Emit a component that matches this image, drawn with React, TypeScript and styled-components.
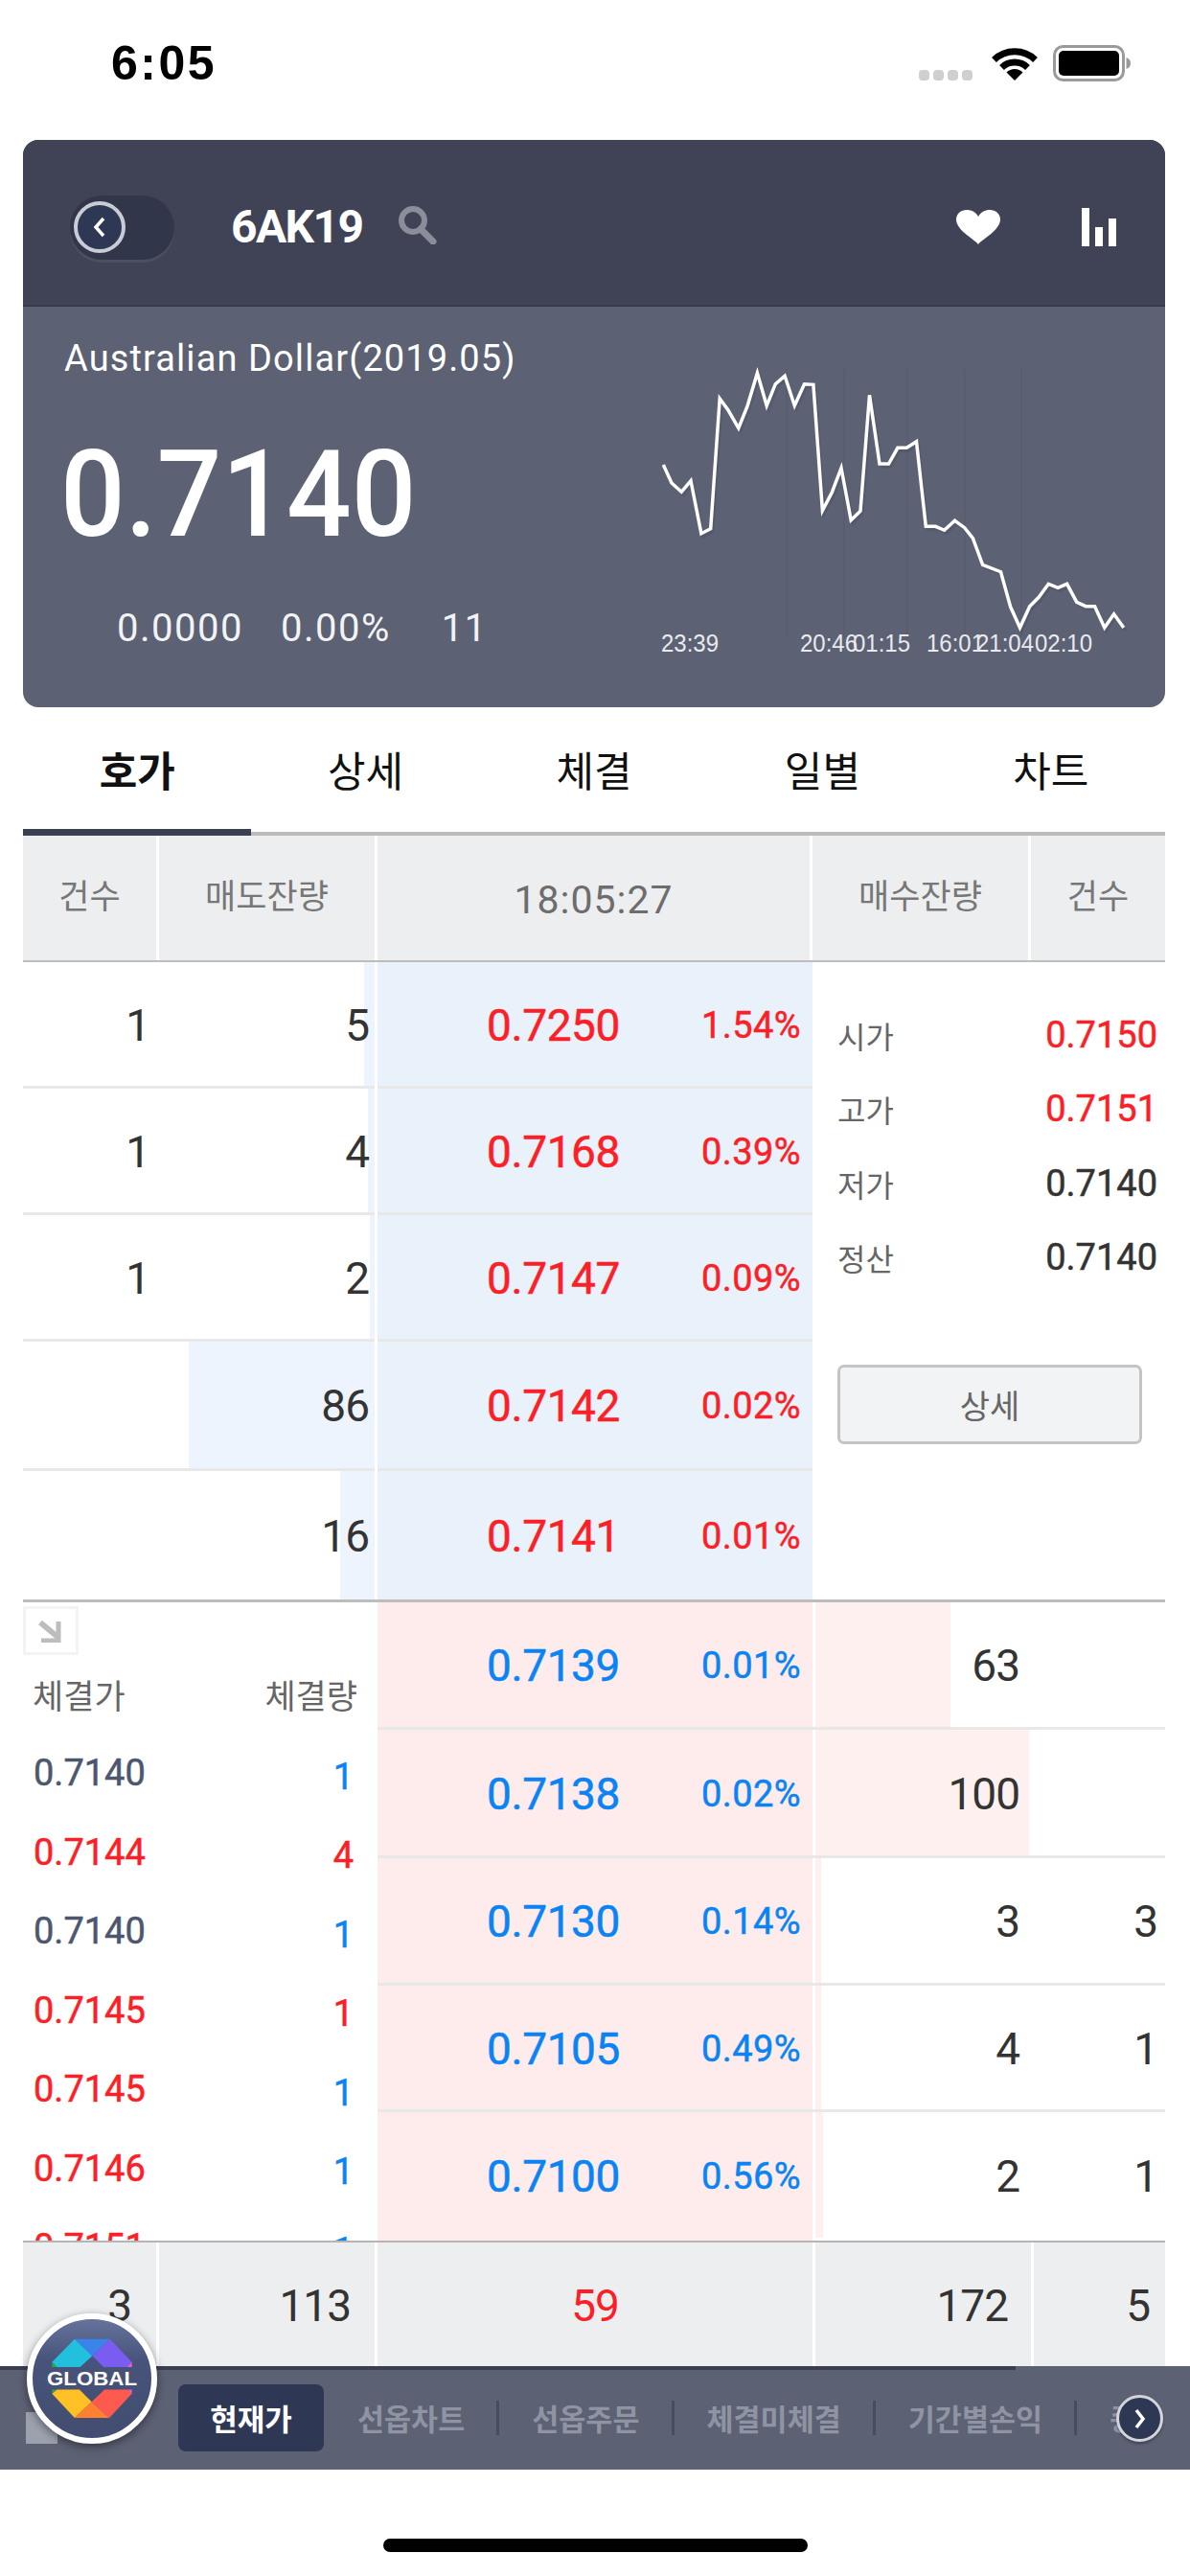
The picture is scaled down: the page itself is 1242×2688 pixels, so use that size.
import React from 'react';
import styled, { createGlobalStyle } from 'styled-components';

const NUM = 'Roboto, "Noto Sans CJK KR", sans-serif';
const KR = '"Noto Sans CJK KR", Roboto, sans-serif';
const RED = '#fb1f27';
const BLUE = '#0a84f5';
const DARK = '#333333';

const Global = createGlobalStyle`
  html, body { margin: 0; padding: 0; background: #fff; }
  * { box-sizing: border-box; }
`;

const Page = styled.div`
  position: relative;
  width: 1242px;
  height: 2688px;
  overflow: hidden;
  background: #fff;
  display: flex;
  flex-direction: column;
`;

/* status bar */
const StatusBar = styled.div`
  height: 146px;
  padding: 47px 61px 0 116px;
  display: flex;
  align-items: flex-start;
  justify-content: space-between;
`;
const Clock = styled.div`
  font: 700 50px/38px "Liberation Sans", sans-serif;
  letter-spacing: 2.5px;
  color: #000;
`;
const StatusIcons = styled.div`
  display: flex;
  align-items: flex-start;
`;
const Dots = styled.div`
  display: flex;
  gap: 4px;
  margin: 26px 19px 0 0;
`;
const Dot = styled.span`
  width: 11px;
  height: 11px;
  border-radius: 4px;
  background: #cfcfcf;
`;

/* content */
const Content = styled.div`
  width: 1192px;
  margin-left: 24px;
`;
const QuoteCard = styled.div`
  height: 592px;
  border-radius: 16px;
  overflow: hidden;
  background: #5c6174;
`;
const CardHeader = styled.div`
  height: 174px;
  padding: 10px 51px 0 49px;
  background: #3f4355;
  border-bottom: 2px solid #363a4b;
  display: flex;
  align-items: center;
`;
const BackToggle = styled.div`
  width: 109px;
  height: 67px;
  padding: 6px 0 0 4px;
  border-radius: 34px;
  background: #32364a;
  box-shadow: 0 3px 0 #4b4f62;
`;
const BackCircle = styled.div`
  width: 54px;
  height: 54px;
  border-radius: 50%;
  background: #2e3754;
  border: 4px solid #c9ccd5;
  display: flex;
  align-items: center;
  justify-content: center;
`;
const Symbol = styled.div`
  margin-left: 59px;
  font: 700 48px/50px ${NUM};
  color: #fff;
  letter-spacing: -1.6px;
`;
const SearchIcon = styled.svg`
  margin: -6px 0 0 37px;
`;
const HeaderActions = styled.div`
  margin-left: auto;
  display: flex;
  align-items: center;
  gap: 85px;
`;
const Hero = styled.div`
  display: flex;
`;
const HeroLeft = styled.div`
  width: 656px;
  padding: 34px 0 0 43px;
`;
const HeroTitle = styled.div`
  font: 400 38px/40px ${NUM};
  letter-spacing: 1.1px;
  color: #fff;
  white-space: nowrap;
`;
const BigPrice = styled.div`
  margin: 57px 0 0 -4px;
  font: 500 126px/130px ${NUM};
  color: #fff;
  transform: scaleX(0.945);
  transform-origin: left center;
`;
const Stats = styled.div`
  margin-top: 53px;
  padding-left: 55px;
  display: flex;
  gap: 39px;
  font: 400 40px/44px ${NUM};
  letter-spacing: 1.5px;
  color: #f2f3f5;
  span:last-child {
    margin-left: 14px;
  }
`;
const Spark = styled.svg`
  display: block;
  margin-top: 50px;
`;

/* tabs */
const Tabs = styled.div`
  display: grid;
  grid-template-columns: repeat(5, 1fr);
`;
const Tab = styled.div<{ $active?: boolean }>`
  height: 134px;
  padding-bottom: 6px;
  display: flex;
  align-items: center;
  justify-content: center;
  font: ${p => (p.$active ? 700 : 400)} 43px/50px ${KR};
  color: #111;
  box-shadow: inset 0 ${p => (p.$active ? '-7px' : '-4px')} ${p => (p.$active ? '#3a3f52' : '#bbbbbb')};
`;

/* table */
const HeadRow = styled.div`
  display: grid;
  grid-template-columns: 139px 225px 451px 225px 1fr;
  column-gap: 3px;
  height: 132px;
  border-bottom: 2px solid #bdbdbd;
`;
const HeadCell = styled.div<{ $time?: boolean }>`
  background: #edeef0;
  display: flex;
  align-items: center;
  justify-content: center;
  padding: ${p => (p.$time ? '4px 0 0' : '0 0 9px')};
  color: ${p => (p.$time ? '#6d6d6d' : '#777')};
  font: ${p => (p.$time ? `400 41px/50px ${NUM}` : `400 35px/40px ${KR}`)};
  letter-spacing: ${p => (p.$time ? '1px' : '0')};
`;
const Section = styled.div<{ $h: number }>`
  height: ${p => p.$h}px;
  display: flex;
  overflow: hidden;
`;
const Column = styled.div<{ $w: number }>`
  width: ${p => p.$w}px;
  flex: none;
  display: flex;
  flex-direction: column;
`;
const Row = styled.div<{ $h: number; $last?: boolean; $strong?: boolean }>`
  height: ${p => p.$h}px;
  flex: none;
  display: grid;
  border-bottom: 3px solid ${p => (p.$strong ? '#bdbdbd' : p.$last ? 'transparent' : '#e8e8e8')};
`;
const AskVolumeGrid = styled(Row)`
  grid-template-columns: 139px 3px 225px;
`;
const BidVolumeGrid = styled(Row)`
  grid-template-columns: 3px 225px 1fr;
`;
const Gap = styled.span``;
const NumCell = styled.div<{ $pad: number; $fill?: number; $tint?: string; $align?: string }>`
  display: flex;
  align-items: center;
  justify-content: flex-end;
  padding: 2px ${p => p.$pad}px 0 0;
  font: 400 46px/50px ${NUM};
  letter-spacing: -1px;
  color: ${DARK};
  background: linear-gradient(${p => p.$tint || '#fff'}, ${p => p.$tint || '#fff'}) no-repeat ${p => p.$align || 'right'} / ${p => p.$fill || 0}px 100%;
`;
const PriceRow = styled(Row)<{ $bg: string }>`
  display: flex;
  align-items: center;
  justify-content: space-between;
  padding: 2px 12px 0 114px;
  background: ${p => p.$bg};
`;
const Price = styled.span<{ $c: string }>`
  font: 400 46px/50px ${NUM};
  letter-spacing: -0.4px;
  color: ${p => p.$c};
  -webkit-text-stroke: 0.5px ${p => p.$c};
`;
const Pct = styled.span<{ $c: string }>`
  font: 400 38px/50px ${NUM};
  letter-spacing: 0.4px;
  color: ${p => p.$c};
  -webkit-text-stroke: 0.5px ${p => p.$c};
`;

/* info panel */
const InfoPanel = styled.div`
  flex: 1;
  padding: 37px 8px 0 26px;
`;
const InfoRow = styled.div`
  height: 77.5px;
  display: flex;
  align-items: center;
  justify-content: space-between;
`;
const InfoLabel = styled.span`
  font: 400 32px/40px ${KR};
  color: #666;
`;
const InfoValue = styled.span<{ $red?: boolean }>`
  font: 400 38px/44px ${NUM};
  color: ${p => (p.$red ? RED : DARK)};
  -webkit-text-stroke: 0.5px ${p => (p.$red ? RED : DARK)};
`;
const DetailButton = styled.div`
  width: 318px;
  height: 83px;
  margin-top: 73px;
  border: 3px solid #c4c4c4;
  border-radius: 7px;
  background: #f2f3f5;
  display: flex;
  align-items: center;
  justify-content: center;
  font: 400 34px/40px ${KR};
  color: #666;
`;

/* ticks */
const TickPanel = styled.div`
  width: 370px;
  flex: none;
  padding-top: 4px;
`;
const ArrowBox = styled.div`
  width: 58px;
  height: 51px;
  border: 3px solid #f3f3f3;
  display: flex;
  align-items: center;
  justify-content: center;
`;
const TickHead = styled.div`
  height: 82px;
  padding: 0 21px 0 10px;
  display: flex;
  align-items: center;
  justify-content: space-between;
  font: 400 35px/40px ${KR};
  color: #666;
`;
const TickRow = styled.div`
  height: 82.5px;
  padding: 0 25px 0 11px;
  display: flex;
  align-items: center;
  justify-content: space-between;
`;
const TickPrice = styled.span<{ $c: string }>`
  font: 400 38px/44px ${NUM};
  color: ${p => p.$c};
  -webkit-text-stroke: 0.5px ${p => p.$c};
`;
const TickVol = styled.span<{ $c: string }>`
  padding-top: 7px;
  font: 400 38px/44px ${NUM};
  color: ${p => p.$c};
  -webkit-text-stroke: 0.5px ${p => p.$c};
`;

/* totals */
const Totals = styled.div`
  display: grid;
  grid-template-columns: 139px 225px 454px 225px 1fr;
  column-gap: 3px;
  height: 131px;
  border-top: 2px solid #b5b5b5;
`;
const TotalCell = styled.div<{ $center?: boolean; $pad?: number; $red?: boolean }>`
  background: #edeef0;
  display: flex;
  align-items: center;
  justify-content: ${p => (p.$center ? 'center' : 'flex-end')};
  padding: 2px ${p => p.$pad || 0}px 0 0;
  font: 400 46px/50px ${NUM};
  letter-spacing: -1px;
  color: ${p => (p.$red ? RED : DARK)};
`;

/* bottom nav */
const BottomNav = styled.div`
  position: relative;
  height: 108px;
  padding: 0 28px 0 186px;
  display: flex;
  align-items: center;
  overflow: hidden;
  background: linear-gradient(#3a3e50, #3a3e50) no-repeat left top / 1060px 4px, #5c6174;
`;
const NavActive = styled.div`
  flex: none;
  width: 152px;
  height: 70px;
  border-radius: 8px;
  background: #2e3754;
  display: flex;
  align-items: center;
  justify-content: center;
  font: 700 31px/36px ${KR};
  color: #fff;
`;
const NavItem = styled.div<{ $first?: boolean; $noLine?: boolean }>`
  flex: none;
  height: 36px;
  padding: 0 33px 0 ${p => (p.$first ? '35px' : '34px')};
  border-right: ${p => (p.$noLine ? '0' : '3px solid #474c61')};
  font: 700 30.5px/36px ${KR};
  color: #8f94a3;
  white-space: nowrap;
`;
const NavNext = styled.div`
  position: absolute;
  top: 30px;
  right: 28px;
  width: 49px;
  height: 49px;
  border-radius: 50%;
  border: 3px solid #d3d5db;
  background: #2e3754;
  box-shadow: 0 2px 3px rgba(0, 0, 0, 0.3);
  display: flex;
  align-items: center;
  justify-content: center;
`;
const CornerMark = styled.div`
  position: absolute;
  left: 27px;
  top: 2517px;
  width: 33px;
  height: 33px;
  background: #9ca1ae;
`;
const GlobalBadge = styled.div`
  position: absolute;
  left: 28px;
  top: 2414px;
  width: 136px;
  height: 136px;
  border-radius: 50%;
  border: 6px solid #fff;
  background: linear-gradient(180deg, #66739c 0%, #47537a 35%, #424d70 100%);
  box-shadow: 0 3px 10px rgba(0, 0, 0, 0.45);
  display: flex;
  align-items: center;
  justify-content: center;
`;
const HomeBar = styled.div`
  width: 443px;
  height: 14px;
  margin: 72px 0 0 400px;
  border-radius: 7px;
  background: #000;
`;

const sparkRaw: [number, number][] = [
  [112, 375], [135, 432], [162, 460], [188, 425], [217, 590], [243, 575], [268, 168], [292, 205], [320, 260],
  [345, 190], [372, 88], [398, 190], [422, 122], [448, 97], [475, 190], [502, 122], [527, 124], [552, 518],
  [578, 462], [604, 385], [631, 548], [657, 520], [682, 157], [710, 372], [735, 372], [760, 322], [785, 322],
  [812, 302], [838, 568], [865, 568], [889, 580], [918, 550], [945, 572], [968, 605], [995, 688], [1045, 710],
  [1072, 820], [1098, 885], [1125, 818], [1150, 790], [1177, 748], [1203, 760], [1228, 748], [1255, 805],
  [1280, 818], [1305, 818], [1332, 885], [1358, 842], [1385, 885],
];
const sparkPoints = sparkRaw.map(([x, y]) => `${(650 + x / 2.649).toFixed(1)},${(360 + y / 3).toFixed(1)}`).join(' ');
const sparkLabels: [string, number][] = [
  ['23:39', 690], ['20:46', 835], ['01:15', 890], ['16:01', 967], ['21:04', 1019], ['02:10', 1080],
];

const asks = [
  { c: '1', v: '5', fill: 11, p: '0.7250', pc: '1.54%', h: 132 },
  { c: '1', v: '4', fill: 7, p: '0.7168', pc: '0.39%', h: 132 },
  { c: '1', v: '2', fill: 5, p: '0.7147', pc: '0.09%', h: 132 },
  { c: '', v: '86', fill: 194, p: '0.7142', pc: '0.02%', h: 135 },
  { c: '', v: '16', fill: 36, p: '0.7141', pc: '0.01%', h: 137 },
];
const bids = [
  { c: '', v: '63', fill: 141, p: '0.7139', pc: '0.01%', h: 133 },
  { c: '', v: '100', fill: 223, p: '0.7138', pc: '0.02%', h: 134 },
  { c: '3', v: '3', fill: 6, p: '0.7130', pc: '0.14%', h: 133 },
  { c: '1', v: '4', fill: 6, p: '0.7105', pc: '0.49%', h: 132 },
  { c: '1', v: '2', fill: 8, p: '0.7100', pc: '0.56%', h: 134 },
];
const ticks = [
  ['0.7140', '#4d566f', '1', BLUE],
  ['0.7144', RED, '4', RED],
  ['0.7140', '#4d566f', '1', BLUE],
  ['0.7145', RED, '1', RED],
  ['0.7145', RED, '1', BLUE],
  ['0.7146', RED, '1', BLUE],
  ['0.7151', RED, '1', BLUE],
];
const info = [
  ['시가', '0.7150', true],
  ['고가', '0.7151', true],
  ['저가', '0.7140', false],
  ['정산', '0.7140', false],
] as const;

export default function App() {
  return (
    <Page>
      <Global />
      <StatusBar>
        <Clock>6:05</Clock>
        <StatusIcons>
          <Dots><Dot /><Dot /><Dot /><Dot /></Dots>
          <svg width="50" height="37" viewBox="0 0 50 37">
            <path d="M3.5 15.5A31 31 0 0 1 46.5 15.5" fill="none" stroke="#000" strokeWidth="7" />
            <path d="M11.5 23.5A19.5 19.5 0 0 1 38.5 23.5" fill="none" stroke="#000" strokeWidth="7" />
            <path d="M25 37L16.5 28.5A12 12 0 0 1 33.5 28.5Z" fill="#000" />
          </svg>
          <svg width="82" height="38" viewBox="0 0 82 38" style={{ marginLeft: 15 }}>
            <rect x="1.5" y="1.5" width="72" height="35" rx="9" fill="#fff" stroke="#9a9a9a" strokeWidth="3" />
            <rect x="6" y="6" width="63" height="26" rx="5" fill="#000" />
            <path d="M76.5 13c3 1 4.500 3.200 4.500 6s-1.500 5-4.500 6z" fill="#9a9a9a" />
          </svg>
        </StatusIcons>
      </StatusBar>

      <Content>
        <QuoteCard>
          <CardHeader>
            <BackToggle>
              <BackCircle>
                <svg width="16" height="24" viewBox="0 0 16 24">
                  <path d="M12 3L4 12l8 9" fill="none" stroke="#fff" strokeWidth="3.500" />
                </svg>
              </BackCircle>
            </BackToggle>
            <Symbol>6AK19</Symbol>
            <SearchIcon width="41" height="41" viewBox="0 0 41 41">
              <circle cx="16" cy="16" r="12" fill="none" stroke="#8b8e9a" strokeWidth="6" />
              <path d="M24 25l13 13" stroke="#8b8e9a" strokeWidth="7" strokeLinecap="round" />
            </SearchIcon>
            <HeaderActions>
              <svg width="46" height="36" viewBox="0 0 46 36">
                <path d="M23 36C18 30 0 21 0 10 0 4 5 0 11 0c5 0 9.500 2.500 12 7 2.500-4.500 7-7 12-7 6 0 11 4 11 10 0 11-18 20-23 26z" fill="#fff" />
              </svg>
              <svg width="36" height="40" viewBox="0 0 36 40">
                <rect x="0" y="0" width="8" height="40" fill="#fff" />
                <rect x="14" y="20" width="8" height="20" fill="#fff" />
                <rect x="28" y="11" width="8" height="29" fill="#fff" />
              </svg>
            </HeaderActions>
          </CardHeader>
          <Hero>
            <HeroLeft>
              <HeroTitle>Australian Dollar(2019.05)</HeroTitle>
              <BigPrice>0.7140</BigPrice>
              <Stats>
                <span>0.0000</span>
                <span>0.00%</span>
                <span>11</span>
              </Stats>
            </HeroLeft>
            <Spark width="510" height="320" viewBox="680 370 510 320">
              {[821, 881, 947, 1007, 1066].map(x => (
                <line key={x} x1={x} x2={x} y1="385" y2="665" stroke="#575c6f" strokeWidth="1.500" />
              ))}
              <polyline points={sparkPoints} fill="none" stroke="#3f4355" strokeOpacity="0.25" strokeWidth="3" transform="translate(2 3)" />
              <polyline points={sparkPoints} fill="none" stroke="#fff" strokeWidth="3.500" />
              {sparkLabels.map(([t, x]) => (
                <text key={t} x={x} y="680" fill="#e9eaee" fontFamily="Liberation Sans, sans-serif" fontSize="25" textLength="60" lengthAdjust="spacingAndGlyphs">{t}</text>
              ))}
            </Spark>
          </Hero>
        </QuoteCard>

        <Tabs>
          <Tab $active>호가</Tab>
          <Tab>상세</Tab>
          <Tab>체결</Tab>
          <Tab>일별</Tab>
          <Tab>차트</Tab>
        </Tabs>

        <HeadRow>
          <HeadCell>건수</HeadCell>
          <HeadCell>매도잔량</HeadCell>
          <HeadCell $time>18:05:27</HeadCell>
          <HeadCell>매수잔량</HeadCell>
          <HeadCell>건수</HeadCell>
        </HeadRow>

        <Section $h={668}>
          <Column $w={367}>
            {asks.map((r, i) => (
              <AskVolumeGrid key={i} $h={r.h} $strong={i === 4}>
                <NumCell $pad={7}>{r.c}</NumCell>
                <Gap />
                <NumCell $pad={6} $fill={r.fill} $tint="#eef4fd">{r.v}</NumCell>
              </AskVolumeGrid>
            ))}
          </Column>
          <Column $w={3}>
            <Row $h={668} $strong />
          </Column>
          <Column $w={454}>
            {asks.map((r, i) => (
              <PriceRow key={i} $h={r.h} $bg="#e9f1fb" $strong={i === 4}>
                <Price $c={RED}>{r.p}</Price>
                <Pct $c={RED}>{r.pc}</Pct>
              </PriceRow>
            ))}
          </Column>
          <Column $w={368}>
            <Row $h={668} $strong style={{ display: 'block' }}>
              <InfoPanel>
                {info.map(([l, v, red]) => (
                  <InfoRow key={l}>
                    <InfoLabel>{l}</InfoLabel>
                    <InfoValue $red={red}>{v}</InfoValue>
                  </InfoRow>
                ))}
                <DetailButton>상세</DetailButton>
              </InfoPanel>
            </Row>
          </Column>
        </Section>

        <Section $h={666}>
          <TickPanel>
            <ArrowBox>
              <svg width="26" height="24" viewBox="0 0 26 24">
                <path d="M2 3l18 15" stroke="#bdbdbd" strokeWidth="6" fill="none" />
                <path d="M21 2v20H3" stroke="#bdbdbd" strokeWidth="5" fill="none" />
              </svg>
            </ArrowBox>
            <TickHead><span>체결가</span><span>체결량</span></TickHead>
            {ticks.map(([p, pc, v, vc], i) => (
              <TickRow key={i}>
                <TickPrice $c={pc}>{p}</TickPrice>
                <TickVol $c={vc}>{v}</TickVol>
              </TickRow>
            ))}
          </TickPanel>
          <Column $w={454}>
            {bids.map((r, i) => (
              <PriceRow key={i} $h={r.h} $bg="#feecec" $last={i === 4}>
                <Price $c={BLUE}>{r.p}</Price>
                <Pct $c={BLUE}>{r.pc}</Pct>
              </PriceRow>
            ))}
          </Column>
          <Column $w={368}>
            {bids.map((r, i) => (
              <BidVolumeGrid key={i} $h={r.h} $last={i === 4}>
                <Gap />
                <NumCell $pad={12} $fill={r.fill} $tint="#fff0f0" $align="left">{r.v}</NumCell>
                <NumCell $pad={8}>{r.c}</NumCell>
              </BidVolumeGrid>
            ))}
          </Column>
        </Section>

        <Totals>
          <TotalCell $pad={26}>3</TotalCell>
          <TotalCell $pad={25}>113</TotalCell>
          <TotalCell $center $red>59</TotalCell>
          <TotalCell $pad={24}>172</TotalCell>
          <TotalCell $pad={16}>5</TotalCell>
        </Totals>
      </Content>

      <BottomNav>
        <NavActive>현재가</NavActive>
        <NavItem $first>선옵차트</NavItem>
        <NavItem>선옵주문</NavItem>
        <NavItem>체결미체결</NavItem>
        <NavItem>기간별손익</NavItem>
        <NavItem $noLine>종</NavItem>
        <NavNext>
          <svg width="14" height="24" viewBox="0 0 14 24">
            <path d="M3 3l7 9-7 9" fill="none" stroke="#fff" strokeWidth="3.500" />
          </svg>
        </NavNext>
      </BottomNav>
      <HomeBar />

      <CornerMark />
      <GlobalBadge>
        <svg width="100" height="84" viewBox="165 358 248 250">
          <polygon points="165,432 235,360 290,412 252,447 180,447" fill="#22c0dd" />
          <polygon points="235,360 345,360 290,412" fill="#3a83e8" />
          <polygon points="345,360 413,432 398,447 325,447 290,412" fill="#7a5cf0" />
          <polygon points="165,432 180,447 165,447" fill="#2aa84a" />
          <polygon points="413,432 413,447 398,447" fill="#e560c0" />
          <polygon points="165,530 180,517 250,517 288,555 235,605" fill="#ffc125" />
          <polygon points="235,605 288,555 343,605" fill="#ff8030" />
          <polygon points="288,555 328,517 398,517 413,530 343,605" fill="#ff5a50" />
          <polygon points="165,517 180,517 165,530" fill="#2aa84a" />
          <polygon points="398,517 413,517 413,530" fill="#e560c0" />
          <text x="289" y="503" textAnchor="middle" fill="#fff" fontFamily="Liberation Sans, sans-serif" fontWeight="700" fontSize="62" textLength="280" lengthAdjust="spacingAndGlyphs">GLOBAL</text>
        </svg>
      </GlobalBadge>
    </Page>
  );
}
